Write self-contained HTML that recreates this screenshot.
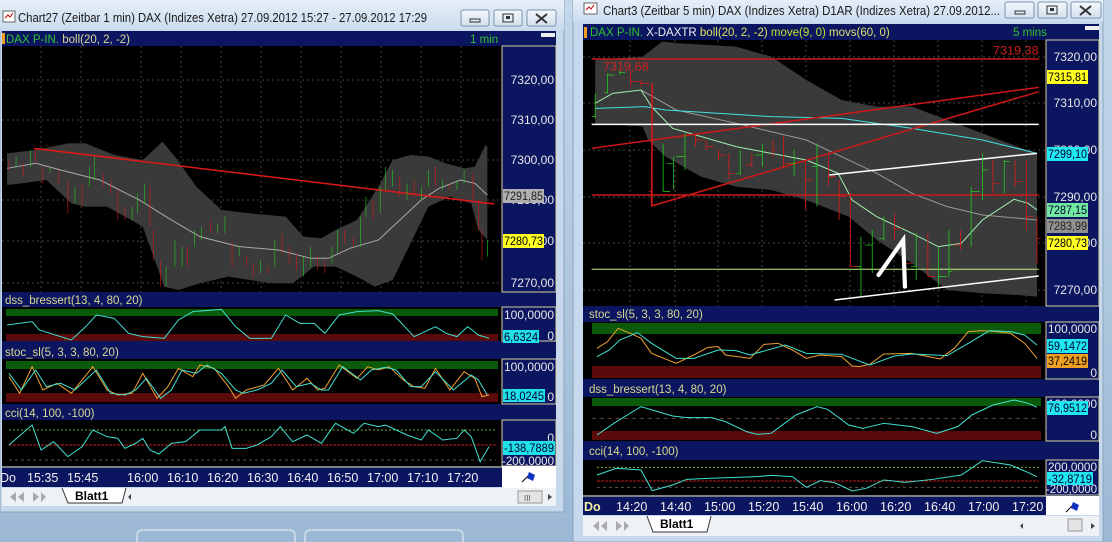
<!DOCTYPE html>
<html><head><meta charset="utf-8"><style>
html,body{margin:0;padding:0;width:1112px;height:542px;overflow:hidden;background:#a9c3dc;}
svg{display:block;font-family:"Liberation Sans",sans-serif;}
.ns{vector-effect:non-scaling-stroke;fill:none}
</style></head><body>
<svg width="1112" height="542" viewBox="0 0 1112 542" xmlns="http://www.w3.org/2000/svg">
<defs>
<linearGradient id="desk" x1="0" y1="0" x2="0" y2="1"><stop offset="0" stop-color="#c4d8ea"/><stop offset="1" stop-color="#9cb8d4"/></linearGradient>
<linearGradient id="tb" x1="0" y1="0" x2="0" y2="1"><stop offset="0" stop-color="#e6eff8"/><stop offset="1" stop-color="#cadcee"/></linearGradient>
<linearGradient id="btn" x1="0" y1="0" x2="0" y2="1"><stop offset="0" stop-color="#f4f8fc"/><stop offset="1" stop-color="#d2e0ee"/></linearGradient>
</defs>
<rect width="1112" height="542" fill="url(#desk)"/>
<rect x="137" y="530" width="158" height="20" rx="5" fill="none" stroke="#eef4fa"/>
<rect x="305" y="530" width="158" height="20" rx="5" fill="none" stroke="#eef4fa"/>

<!-- ================= LEFT WINDOW ================= -->
<rect x="0" y="0" width="564" height="512" fill="#c5d8ec" stroke="#8aa4c0"/>
<rect x="0" y="0" width="564" height="30" fill="url(#tb)"/>
<rect x="3" y="11" width="12" height="11" fill="#fff" stroke="#666"/><path d="M5 18l3-3 2 2 3-4" stroke="#c00" fill="none"/>
<text x="18" y="22" font-size="12.5" fill="#1a1a1a" textLength="409" lengthAdjust="spacingAndGlyphs">Chart27 (Zeitbar 1 min)  DAX (Indizes Xetra) 27.09.2012 15:27 - 27.09.2012 17:29</text>
<g stroke="#7d93ad" fill="url(#btn)"><rect x="461" y="10" width="28" height="16" rx="2"/><rect x="494" y="10" width="28" height="16" rx="2"/><rect x="527" y="10" width="29" height="16" rx="2"/></g>
<rect x="470" y="19" width="10" height="3" fill="none" stroke="#333"/>
<rect x="503" y="14" width="10" height="8" fill="none" stroke="#333"/><rect x="506" y="16" width="4" height="3" fill="#333"/>
<path d="M536 14l11 9M547 14l-11 9" stroke="#333" stroke-width="2"/>

<rect x="2" y="31" width="554" height="437" fill="#0c1660"/>
<rect x="2" y="33" width="3" height="11" fill="#f0a020"/>
<text x="6" y="43" font-size="11.5"><tspan fill="#30c030">DAX P-IN.</tspan><tspan fill="#d8d890"> boll(20, 2, -2)</tspan></text>
<text x="470" y="43" font-size="11.5" fill="#30c030">1 min</text>
<rect x="541" y="33" width="14" height="4" fill="#eee"/>
<rect x="2" y="46" width="500" height="246" fill="#000"/>
<g stroke="#444" stroke-dasharray="2,3"><path d="M2 80H502M2 120H502M2 160H502M2 200H502M2 241H502M2 283H502"/>
<path d="M41 46V292M81 46V292M141 46V292M181 46V292M221 46V292M261 46V292M301 46V292M341 46V292M381 46V292M421 46V292M461 46V292"/></g>
<g transform="scale(0.357,0.3333)">
<polygon fill="#3a3a3a" points="20,460 100,450 190,430 240,430 320,465 400,480 455,425 490,470 550,560 620,630 700,640 800,650 850,710 900,715 940,690 1000,660 1060,560 1100,480 1150,465 1200,470 1250,490 1300,505 1330,500 1360,435 1365,440 1365,720 1340,690 1320,610 1260,590 1200,620 1150,730 1100,840 1050,860 1000,830 940,800 880,800 820,850 760,850 700,840 640,830 560,850 500,870 460,860 430,770 400,680 350,650 300,620 240,620 200,610 130,540 60,550 20,555"/>
<polyline class="ns" stroke="#aaa" points="20,505 100,490 170,510 280,540 390,600 480,660 560,710 670,740 780,750 870,775 920,775 980,745 1060,720 1120,660 1180,600 1230,565 1290,540 1330,550 1365,585"/>
<polyline class="ns" stroke="#e01818" stroke-width="1.5" points="95,445 1385,612"/>
<g class="ns" stroke-width="1.6">
<path stroke="#e01818" d="M25 480V510M65 490V530M100 445V490M120 500V550M165 510V550M190 540V640M230 550V620M290 520V560M310 540V580M330 570V660M350 620V660M420 560V680M430 690V780M450 780V860M525 740V800M590 660V700M650 730V800M690 770V800M710 790V830M750 800V820M790 700V760M810 740V790M830 760V810M890 770V810M910 780V820M965 690V730M990 710V740M1045 600V660M1120 530V590M1160 540V590M1220 500V560M1260 550V570M1325 520V600M1340 600V690M1350 690V780"/>
<path stroke="#20d020" d="M45 470V500M85 450V500M140 500V520M210 560V610M250 500V560M265 470V540M370 620V660M385 580V640M405 550V610M465 800V860M490 720V800M510 740V800M545 690V740M565 680V720M610 670V700M630 650V700M670 740V770M730 780V820M770 720V800M850 770V830M870 740V800M930 740V790M945 690V760M1010 650V740M1025 590V650M1065 560V640M1080 500V570M1100 510V560M1140 550V600M1180 560V600M1200 510V560M1240 540V570M1280 540V570M1300 510V550M1365 720V770"/>
</g></g>
<rect x="502" y="46" width="54" height="246" fill="#0c1660" stroke="#d8d0a0"/>
<g font-size="12" fill="#e8e8e8" text-anchor="end"><text x="554" y="84">7320,00</text><text x="554" y="124">7310,00</text><text x="554" y="164">7300,00</text><text x="554" y="204">7290,00</text><text x="554" y="245">7280,00</text><text x="554" y="287">7270,00</text></g>
<rect x="503" y="189" width="41" height="14" fill="#b0b0b0"/><text x="504" y="200" font-size="12" fill="#222" textLength="39" lengthAdjust="spacingAndGlyphs">7291,85</text>
<rect x="503" y="234" width="41" height="14" fill="#ffff20"/><text x="504" y="245" font-size="12" fill="#000" textLength="39" lengthAdjust="spacingAndGlyphs">7280,73</text>
<text x="5" y="304" font-size="11.5" fill="#d8d890">dss_bressert(13, 4, 80, 20)</text>
<rect x="2" y="307" width="500" height="34" fill="#000"/>
<rect x="6" y="309" width="492" height="7" fill="#0a5a0a"/><rect x="6" y="334" width="492" height="7" fill="#5a0a0a"/>
<rect x="502" y="307" width="54" height="34" fill="#0c1660" stroke="#d8d0a0"/>
<text x="554" y="319" font-size="12" fill="#e8e8e8" text-anchor="end" textLength="50" lengthAdjust="spacingAndGlyphs">100,0000</text><text x="554" y="340" font-size="12" fill="#e8e8e8" text-anchor="end">0</text>
<rect x="503" y="330" width="36" height="13" fill="#20e0e8"/><text x="504" y="341" font-size="12" fill="#003" textLength="34" lengthAdjust="spacingAndGlyphs">6,6324</text>
<g transform="translate(0,290) scale(0.357,0.3333)"><polyline class="ns" stroke="#40e0d0" points="20,105 90,95 110,120 200,150 240,110 270,75 320,85 360,130 400,140 460,145 500,90 540,65 620,58 660,110 700,145 760,145 800,75 840,100 880,100 910,130 950,75 1000,65 1060,62 1100,72 1160,140 1220,110 1250,130 1280,140 1310,110 1340,135 1370,145"/></g>
<text x="5" y="356" font-size="11.5" fill="#d8d890">stoc_sl(5, 3, 3, 80, 20)</text>
<rect x="2" y="359" width="500" height="45" fill="#000"/>
<rect x="6" y="361" width="492" height="8" fill="#0a5a0a"/><rect x="6" y="393" width="492" height="9" fill="#5a0a0a"/>
<rect x="502" y="359" width="54" height="45" fill="#0c1660" stroke="#d8d0a0"/>
<text x="554" y="371" font-size="12" fill="#e8e8e8" text-anchor="end" textLength="50" lengthAdjust="spacingAndGlyphs">100,0000</text><text x="554" y="401" font-size="12" fill="#e8e8e8" text-anchor="end">0</text>
<rect x="503" y="389" width="42" height="13" fill="#20e0e8"/><text x="504" y="400" font-size="12" fill="#003" textLength="40" lengthAdjust="spacingAndGlyphs">18,0245</text>
<g transform="translate(0,290) scale(0.357,0.3333)">
<polyline class="ns" stroke="#f0a030" points="25,260 55,310 90,230 120,300 160,280 200,310 260,230 300,300 330,315 370,310 400,250 440,325 470,290 500,235 540,260 560,225 600,235 640,290 660,325 690,300 740,285 780,235 820,300 860,265 890,300 910,295 950,225 1000,265 1030,230 1060,240 1090,230 1130,270 1160,290 1190,295 1220,235 1260,300 1300,245 1330,265 1350,320 1370,315"/>
<polyline class="ns" stroke="#40e0d0" points="25,250 60,300 100,240 130,290 170,280 210,300 270,240 310,310 350,315 380,300 410,265 450,325 480,300 510,240 550,250 580,225 620,250 660,300 680,310 720,300 760,280 790,240 830,290 870,280 900,300 920,300 960,230 1010,270 1040,240 1080,232 1110,240 1150,290 1180,290 1220,245 1270,300 1320,255 1340,270 1365,315"/></g>
<text x="5" y="417" font-size="11.5" fill="#d8d890">cci(14, 100, -100)</text>
<rect x="2" y="420" width="500" height="46" fill="#000"/>
<rect x="502" y="420" width="54" height="46" fill="#0c1660" stroke="#d8d0a0"/>
<text x="554" y="442" font-size="12" fill="#e8e8e8" text-anchor="end">0</text>
<text x="554" y="465" font-size="12" fill="#e8e8e8" text-anchor="end" textLength="52" lengthAdjust="spacingAndGlyphs">-200,0000</text>
<rect x="503" y="441" width="52" height="14" fill="#20e0e8"/><text x="504" y="452" font-size="12" fill="#003" textLength="50" lengthAdjust="spacingAndGlyphs">-138,7889</text>
<g transform="translate(0,290) scale(0.357,0.3333)">
<path class="ns" stroke="#70b030" stroke-dasharray="2,2" d="M25 420H1390"/><path class="ns" stroke="#c02020" stroke-dasharray="3,1" d="M25 465H1390"/><path class="ns" stroke="#555" stroke-dasharray="3,3" d="M25 510H1390"/>
<polyline class="ns" stroke="#40e0d0" points="25,465 90,405 115,480 150,455 190,500 230,470 260,420 300,440 330,445 350,475 380,460 400,445 420,480 445,492 480,460 520,455 560,420 620,420 630,410 650,475 690,475 720,465 760,440 785,410 800,430 820,455 860,435 900,460 940,400 990,430 1020,400 1060,410 1080,405 1140,435 1180,450 1200,420 1240,450 1280,445 1300,420 1320,440 1345,515 1370,470"/></g>
<rect x="2" y="467" width="500" height="20" fill="#0c1660"/><path d="M2 467H502" stroke="#e8e8b0"/>
<rect x="502" y="466" width="54" height="22" fill="#fff"/>
<path d="M522 482l8-8" stroke="#000"/><path d="M529 472l6 3-2 6-6-3z" fill="#1030c0"/>
<g font-size="12.5" fill="#f0f0f0"><text x="0" y="482">Do</text><text x="27" y="482">15:35</text><text x="67" y="482">15:45</text><text x="127" y="482">16:00</text><text x="167" y="482">16:10</text><text x="207" y="482">16:20</text><text x="247" y="482">16:30</text><text x="287" y="482">16:40</text><text x="327" y="482">16:50</text><text x="367" y="482">17:00</text><text x="407" y="482">17:10</text><text x="447" y="482">17:20</text></g>
<rect x="2" y="488" width="554" height="18" fill="#eef1f5"/>
<g fill="#aaa"><path d="M6 492v10M16 492l-6 5 6 5zM24 492l-6 5 6 5z"/><path d="M33 492l6 5-6 5zM46 492v10M41 492l5 5-5 5z"/></g>
<path d="M62 488l6 15h54l4-15" fill="#fff" stroke="#333"/><text x="75" y="500" font-size="12" font-weight="bold" fill="#000">Blatt1</text>
<path d="M518 491h24v12h-24z" fill="#e4e4e4" stroke="#999"/><text x="524" y="501" font-size="8" fill="#555">III</text>
<path d="M548 494l4 3-4 3z" fill="#444"/><path d="M131 494l-3 3 3 3z" fill="#444"/>

<!-- ================= RIGHT WINDOW ================= -->
<rect x="573" y="0" width="530" height="542" fill="#c5d8ec" stroke="#8aa4c0"/>
<rect x="573" y="0" width="530" height="22" fill="url(#tb)"/>
<rect x="584" y="3" width="13" height="11" fill="#fff" stroke="#666"/><path d="M586 10l3-3 2 2 3-4" stroke="#c00" fill="none"/>
<text x="603" y="15" font-size="12.5" fill="#1a1a1a" textLength="397" lengthAdjust="spacingAndGlyphs">Chart3 (Zeitbar 5 min)  DAX (Indizes Xetra) D1AR (Indizes Xetra) 27.09.2012...</text>
<g stroke="#7d93ad" fill="url(#btn)"><rect x="1005" y="2" width="29" height="16" rx="2"/><rect x="1038" y="2" width="29" height="16" rx="2"/><rect x="1071" y="2" width="30" height="16" rx="2"/></g>
<rect x="1015" y="11" width="10" height="3" fill="none" stroke="#333"/>
<rect x="1047" y="6" width="10" height="8" fill="none" stroke="#333"/><rect x="1050" y="8" width="4" height="3" fill="#333"/>
<path d="M1080 6l11 9M1091 6l-11 9" stroke="#333" stroke-width="2"/>

<rect x="583" y="24" width="516" height="472" fill="#0c1660"/>
<rect x="584" y="27" width="3" height="11" fill="#f0a020"/>
<text x="590" y="36" font-size="11.5"><tspan fill="#30c030">DAX P-IN.</tspan><tspan fill="#f0f0f0"> X-DAXTR</tspan><tspan fill="#e0e060"> boll(20, 2, -2)</tspan><tspan fill="#c0e030"> move(9, 0)</tspan><tspan fill="#e0e070"> movs(60, 0)</tspan></text>
<text x="1013" y="36" font-size="11.5" fill="#30c030">5 mins</text>
<rect x="1085" y="26" width="14" height="4" fill="#eee"/>
<rect x="583" y="40" width="463" height="266" fill="#000"/>
<g stroke="#444" stroke-dasharray="2,3"><path d="M583 57H1046M583 103H1046M583 150H1046M583 197H1046M583 243H1046M583 290H1046"/>
<path d="M630 40V306M675 40V306M718 40V306M762 40V306M806 40V306M850 40V306M894 40V306M938 40V306M982 40V306M1026 40V306"/></g>
<g transform="translate(560,0) scale(0.352,0.3333)">
<polygon fill="#3a3a3a" points="100,180 235,170 290,125 340,130 500,140 600,170 700,240 800,300 900,320 1000,320 1100,360 1200,400 1300,440 1355,460 1355,890 1300,885 1200,880 1100,870 1000,790 900,720 820,650 700,600 600,570 500,560 400,530 300,470 250,420 235,380 100,370"/>
<polyline class="ns" stroke="#999" points="230,270 330,330 500,370 700,420 800,470 900,520 1000,580 1100,620 1200,645 1355,660"/>
<polyline class="ns" stroke="#40e0e0" points="100,325 240,320 300,330 600,350 800,355 1000,385 1200,420 1355,460"/>
<polyline class="ns" stroke="#a0f0b0" points="100,310 150,280 230,270 260,320 320,385 500,440 700,480 790,520 830,600 900,650 1000,700 1075,740 1140,730 1200,660 1290,598 1330,610 1355,630"/>
<path class="ns" stroke="#d01818" stroke-width="1.5" d="M90 177H1360M90 585H1360M90 445L1360 262M260 618L1360 275M260 618L262 250"/>
<path class="ns" stroke="#fff" stroke-width="1.5" d="M90 373H1360M765 525L1355 460M780 900L1360 828"/>
<path class="ns" stroke="#c0f080" d="M90 808H1360"/>
<g class="ns" stroke-width="2.2">
<path stroke="#20d020" d="M100 280V355M135 220V280M170 210V225M293 430V575M323 470V570M355 400V510M512 450V525M575 430V500M665 450V530M730 430V620M855 710V890M887 690V820M920 650V720M1012 700V840M1075 740V860M1105 690V830M1168 560V740M1200 460V600M1262 480V580"/>
<path stroke="#e01818" d="M200 210V260M230 240V260M262 250V620M385 400V440M415 420V450M450 450V480M480 460V540M545 460V500M605 420V470M635 410V500M697 480V630M763 460V560M793 540V660M825 580V800M950 640V720M980 720V830M1045 700V830M1138 690V750M1230 480V580M1293 480V560M1325 480V690M1355 650V790"/>
<path stroke="#20d020" d="M100 350h-10M135 278h-10M135 225h20M170 218h15M293 575h20M323 490h-20M355 470h-25M512 520h-15M575 465h-20M665 490h-20M730 500h-15M855 800h-20M887 735h-20M920 715h-15M1012 800h-15M1075 830h25M1105 815h10M1168 575h25M1200 510h15M1262 485h15"/>
<path stroke="#e01818" d="M200 245h25M230 250h25M262 575h-10M385 420h20M415 440h20M450 465h20M480 520h20M545 495h-15M605 450h10M635 490h20M697 540h20M763 530h20M793 590h20M825 800h20M950 685h20M980 790h20M1045 830h20M1138 735h-20M1230 550h20M1293 545h20M1325 650h20M1355 715h10"/>
</g>
<text x="1360" y="163" font-size="36" fill="#d02020" text-anchor="end">7319,38</text>
<text x="122" y="212" font-size="36" fill="#d02020">7319,68</text>
<path d="M905 825L975 720L980 860" stroke="#fff" stroke-width="12" fill="none" stroke-linecap="round"/>
</g>
<rect x="1046" y="40" width="53" height="266" fill="#0c1660" stroke="#d8d0a0"/>
<g font-size="12" fill="#e8e8e8" text-anchor="end"><text x="1097" y="61">7320,00</text><text x="1097" y="107">7310,00</text><text x="1097" y="154">7300,00</text><text x="1097" y="201">7290,00</text><text x="1097" y="247">7280,00</text><text x="1097" y="294">7270,00</text></g>
<g font-size="12" fill="#000">
<rect x="1047" y="70" width="41" height="14" fill="#ffff20"/><text x="1048" y="81" textLength="39" lengthAdjust="spacingAndGlyphs">7315,81</text>
<rect x="1047" y="147" width="41" height="14" fill="#20e8f0"/><text x="1048" y="158" fill="#003" textLength="39" lengthAdjust="spacingAndGlyphs">7299,10</text>
<rect x="1047" y="203" width="41" height="14" fill="#70e8a0"/><text x="1048" y="214" fill="#003" textLength="39" lengthAdjust="spacingAndGlyphs">7287,15</text>
<rect x="1047" y="219" width="41" height="14" fill="#909090"/><text x="1048" y="230" fill="#222" textLength="39" lengthAdjust="spacingAndGlyphs">7283,99</text>
<rect x="1047" y="236" width="41" height="14" fill="#ffff20"/><text x="1048" y="247" textLength="39" lengthAdjust="spacingAndGlyphs">7280,73</text>
</g>
<text x="589" y="318" font-size="11.5" fill="#d8d890">stoc_sl(5, 3, 3, 80, 20)</text>
<rect x="583" y="322" width="463" height="57" fill="#000"/>
<rect x="592" y="323" width="449" height="11" fill="#0a5a0a"/><rect x="592" y="366" width="449" height="12" fill="#5a0a0a"/>
<rect x="1046" y="322" width="53" height="57" fill="#0c1660" stroke="#d8d0a0"/>
<text x="1097" y="333" font-size="12" fill="#e8e8e8" text-anchor="end" textLength="49" lengthAdjust="spacingAndGlyphs">100,0000</text><text x="1097" y="377" font-size="12" fill="#e8e8e8" text-anchor="end">0</text>
<rect x="1047" y="339" width="41" height="14" fill="#20e8f0"/><text x="1048" y="350" font-size="12" fill="#003" textLength="39" lengthAdjust="spacingAndGlyphs">59,1472</text>
<rect x="1047" y="354" width="41" height="14" fill="#f0a020"/><text x="1048" y="365" font-size="12" fill="#000" textLength="39" lengthAdjust="spacingAndGlyphs">37,2419</text>
<text x="589" y="393" font-size="11.5" fill="#d8d890">dss_bressert(13, 4, 80, 20)</text>
<rect x="583" y="397" width="463" height="44" fill="#000"/>
<rect x="592" y="398" width="449" height="8" fill="#0a5a0a"/><rect x="592" y="431" width="449" height="9" fill="#5a0a0a"/>
<rect x="1046" y="397" width="53" height="44" fill="#0c1660" stroke="#d8d0a0"/>
<text x="1097" y="408" font-size="12" fill="#e8e8e8" text-anchor="end" textLength="49" lengthAdjust="spacingAndGlyphs">100,0000</text><text x="1097" y="439" font-size="12" fill="#e8e8e8" text-anchor="end">0</text>
<rect x="1047" y="401" width="41" height="14" fill="#20e8f0"/><text x="1048" y="412" font-size="12" fill="#003" textLength="39" lengthAdjust="spacingAndGlyphs">76,9512</text>
<text x="589" y="455" font-size="11.5" fill="#d8d890">cci(14, 100, -100)</text>
<rect x="583" y="460" width="463" height="35" fill="#000"/>
<rect x="1046" y="460" width="53" height="35" fill="#0c1660" stroke="#d8d0a0"/>
<text x="1097" y="471" font-size="12" fill="#e8e8e8" text-anchor="end" textLength="49" lengthAdjust="spacingAndGlyphs">200,0000</text><text x="1097" y="493" font-size="12" fill="#e8e8e8" text-anchor="end" textLength="51" lengthAdjust="spacingAndGlyphs">-200,0000</text>
<rect x="1047" y="472" width="46" height="13" fill="#20e8f0"/><text x="1048" y="483" font-size="12" fill="#003" textLength="44" lengthAdjust="spacingAndGlyphs">-32,8719</text>
<g transform="translate(560,290) scale(0.352,0.3333)">
<polyline class="ns" stroke="#f0a030" points="105,175 135,155 165,115 200,130 230,145 260,190 330,220 380,195 420,172 450,170 470,195 540,205 580,163 620,160 660,180 700,205 740,195 800,200 830,228 850,230 880,223 920,192 1000,190 1080,207 1120,175 1160,125 1200,122 1240,125 1280,130 1320,160 1355,205"/>
<polyline class="ns" stroke="#40e0d0" points="105,200 140,180 170,150 220,128 260,160 330,205 380,205 450,180 500,182 540,195 640,165 700,190 800,193 880,225 950,198 1000,192 1100,197 1160,160 1220,122 1280,125 1320,135 1355,165"/>
<path class="ns" stroke="#6a4a3a" stroke-dasharray="4,4" d="M90 385H1360"/>
<polyline class="ns" stroke="#40e0d0" points="105,435 160,395 230,350 320,378 360,383 430,383 470,395 530,425 560,433 600,430 670,375 730,350 760,358 820,405 860,415 920,400 960,405 1000,410 1070,430 1130,410 1170,375 1230,345 1290,330 1330,340 1355,352"/>
<path class="ns" stroke="#70b030" stroke-dasharray="2,2" d="M105 532H1360"/><path class="ns" stroke="#c02020" stroke-dasharray="3,1" d="M105 573H1360"/><path class="ns" stroke="#555" stroke-dasharray="3,3" d="M105 592H1360"/>
<polyline class="ns" stroke="#40e0d0" points="105,555 160,535 230,540 262,602 320,585 360,568 420,565 560,560 600,556 660,560 700,592 740,572 780,578 830,603 870,595 920,570 980,577 1060,568 1140,555 1200,512 1280,525 1320,543 1355,560"/>
</g>
<rect x="583" y="496" width="463" height="19" fill="#0c1660"/><path d="M583 496H1046" stroke="#e8e8b0"/>
<rect x="1046" y="496" width="53" height="19" fill="#fff"/>
<path d="M1066 512l8-8" stroke="#000"/><path d="M1073 502l6 3-2 6-6-3z" fill="#1030c0"/>
<g font-size="12.5" fill="#f0f0f0"><text x="584" y="511" font-weight="bold" fill="#f0f0a0">Do</text><text x="616" y="511">14:20</text><text x="660" y="511">14:40</text><text x="704" y="511">15:00</text><text x="748" y="511">15:20</text><text x="792" y="511">15:40</text><text x="836" y="511">16:00</text><text x="880" y="511">16:20</text><text x="924" y="511">16:40</text><text x="968" y="511">17:00</text><text x="1012" y="511">17:20</text></g>
<rect x="583" y="516" width="516" height="20" fill="#eef1f5"/>
<g fill="#aaa"><path d="M589 521v11M599 521l-6 5 6 5zM607 521l-6 5 6 5z"/><path d="M616 521l6 5-6 5zM629 521v11M624 521l5 5-5 5z"/></g>
<path d="M647 516l6 16h54l4-16" fill="#fff" stroke="#333"/><text x="660" y="528" font-size="12" font-weight="bold" fill="#000">Blatt1</text>
<rect x="1068" y="519" width="14" height="12" fill="#e4e4e4" stroke="#999"/><path d="M1091 523l4 3-4 3z" fill="#444"/><path d="M1023 523l-3 3 3 3z" fill="#444"/>
</svg>
</body></html>
